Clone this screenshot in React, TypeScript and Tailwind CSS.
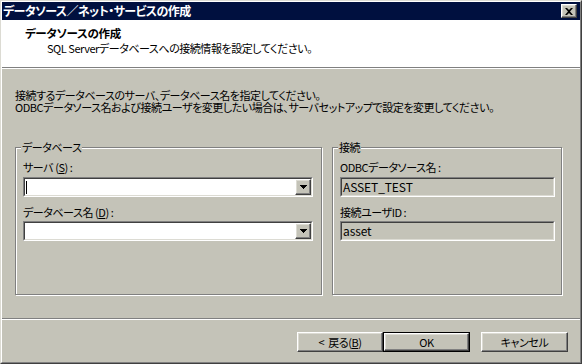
const BG = "bg-[#c4c3b8]";

function Raised({ children, className = "" }: { children?: React.ReactNode; className?: string }) {
  return (
    <div
      className={`flex items-center justify-center ${BG} border-t border-l border-t-white border-l-white border-r border-b border-r-[#404040] border-b-[#404040] shadow-[inset_-1px_-1px_0_#808080,inset_1px_1px_0_#dcdbd3] ${className}`}
    >
      {children}
    </div>
  );
}

function Sunken({ children, className = "", inner = "" }: { children?: React.ReactNode; className?: string; inner?: string }) {
  return (
    <div
      className={`flex border-t border-l border-t-[#808080] border-l-[#808080] border-r border-b border-r-white border-b-white ${className}`}
    >
      <div
        className={`flex-1 flex min-w-0 border-t border-l border-t-[#404040] border-l-[#404040] border-r border-b border-r-[#dcdbd3] border-b-[#dcdbd3] ${inner}`}
      >
        {children}
      </div>
    </div>
  );
}

function DropBtn() {
  return (
    <Raised className="w-[16px] h-[16px]">
      <svg width="7" height="4" viewBox="0 0 7 4">
        <path d="M0 0H7L3.5 4Z" fill="#000" shapeRendering="crispEdges" />
      </svg>
    </Raised>
  );
}

function Combo({ caret = false }: { caret?: boolean }) {
  return (
    <Sunken className="w-[290px] h-[20px]" inner="bg-white">
      <div className="flex-1 flex items-center pl-[1px]">
        {caret && <div className="w-px h-[13px] bg-black" />}
      </div>
      <DropBtn />
    </Sunken>
  );
}

function ReadBox({ value }: { value: string }) {
  return (
    <Sunken className="w-[215px] h-[20px]" inner={BG}>
      <div className="flex-1 flex items-center pl-[1px] text-[12px] tracking-[-0.1px]">{value}</div>
    </Sunken>
  );
}

function Group({ title, width, children }: { title: string; width: string; children?: React.ReactNode }) {
  return (
    <div
      className={`relative ${width} h-[148px] border border-[#808080] shadow-[inset_1px_1px_0_#fff,1px_1px_0_#fff] pl-[7px] flex flex-col`}
    >
      <span className={`absolute left-[5px] top-[-7px] ${BG} px-[1px] h-[12px]`}>{title}</span>
      {children}
    </div>
  );
}

export default function App() {
  return (
    <div className={`w-[582px] h-[364px] ${BG} font-['Noto_Sans_CJK_JP',sans-serif] [font-feature-settings:'palt'] text-[11px] tracking-[-0.45px] leading-[12px] text-black`}>
      <div className="w-full h-full flex border-t border-l border-t-[#dcdbd3] border-l-[#dcdbd3] border-r border-b border-r-[#404040] border-b-[#404040]">
        <div className="flex-1 min-w-0 flex flex-col border-t border-l border-t-white border-l-white border-r border-b border-r-[#808080] border-b-[#808080]">
          {/* title bar */}
          <div className="h-[18px] bg-[#00103f] flex items-center pl-[1px] pr-[3px] text-white font-bold text-[12px] tracking-[-0.6px]">
            <span className="flex-1">データソース／ネット・サービスの作成</span>
            <Raised className="w-[16px] h-[14px]">
              <svg width="8" height="7" viewBox="0 0 8 7">
                <path d="M0 0H2L4 2L6 0H8L5 3.5L8 7H6L4 5L2 7H0L3 3.5Z" fill="#000" />
              </svg>
            </Raised>
          </div>
          {/* header */}
          <div className="h-[47px] bg-white pt-[7px] pl-[23px] flex flex-col">
            <div className="font-bold text-[11.5px] tracking-[-0.3px]">データソースの作成</div>
            <div className="mt-[3px] ml-[22px]">SQL Serverデータベースへの接続情報を設定してください。</div>
          </div>
          <div className="h-px bg-[#808080]" />
          <div className="h-px bg-white" />
          {/* main */}
          <div className="h-[249px] pt-[20px] pl-[13px] flex flex-col">
            <div>接続するデータベースのサーバ、データベース名を指定してください。</div>
            <div>ODBCデータソース名および接続ユーザを変更したい場合は、サーバセットアップで設定を変更してください。</div>
            <div className="mt-[34px] flex gap-[10px]">
              <Group title="データベース" width="w-[307px]">
                <div className="mt-[13px]">
                  サーバ (<span className="underline">S</span>) :
                </div>
                <div className="mt-[4px]">
                  <Combo caret />
                </div>
                <div className="mt-[9px]">
                  データベース名 (<span className="underline">D</span>) :
                </div>
                <div className="mt-[3px]">
                  <Combo />
                </div>
              </Group>
              <Group title="接続" width="w-[230px]">
                <div className="mt-[13px]">ODBCデータソース名 :</div>
                <div className="mt-[4px]">
                  <ReadBox value="ASSET_TEST" />
                </div>
                <div className="mt-[9px]">接続ユーザID :</div>
                <div className="mt-[3px]">
                  <ReadBox value="asset" />
                </div>
              </Group>
            </div>
          </div>
          <div className="h-px bg-[#808080]" />
          <div className="h-px bg-white" />
          {/* buttons */}
          <div className="flex-1 flex justify-end items-start pt-[12px] pr-[12px]">
            <Raised className="w-[86px] h-[20px]">
              &lt;&nbsp;&nbsp;戻る(<span className="underline">B</span>)
            </Raised>
            <div className="w-[87px] h-[20px] border border-black flex">
              <Raised className="flex-1">OK</Raised>
            </div>
            <Raised className="w-[87px] h-[20px] ml-[11px]">キャンセル</Raised>
          </div>
        </div>
      </div>
    </div>
  );
}
